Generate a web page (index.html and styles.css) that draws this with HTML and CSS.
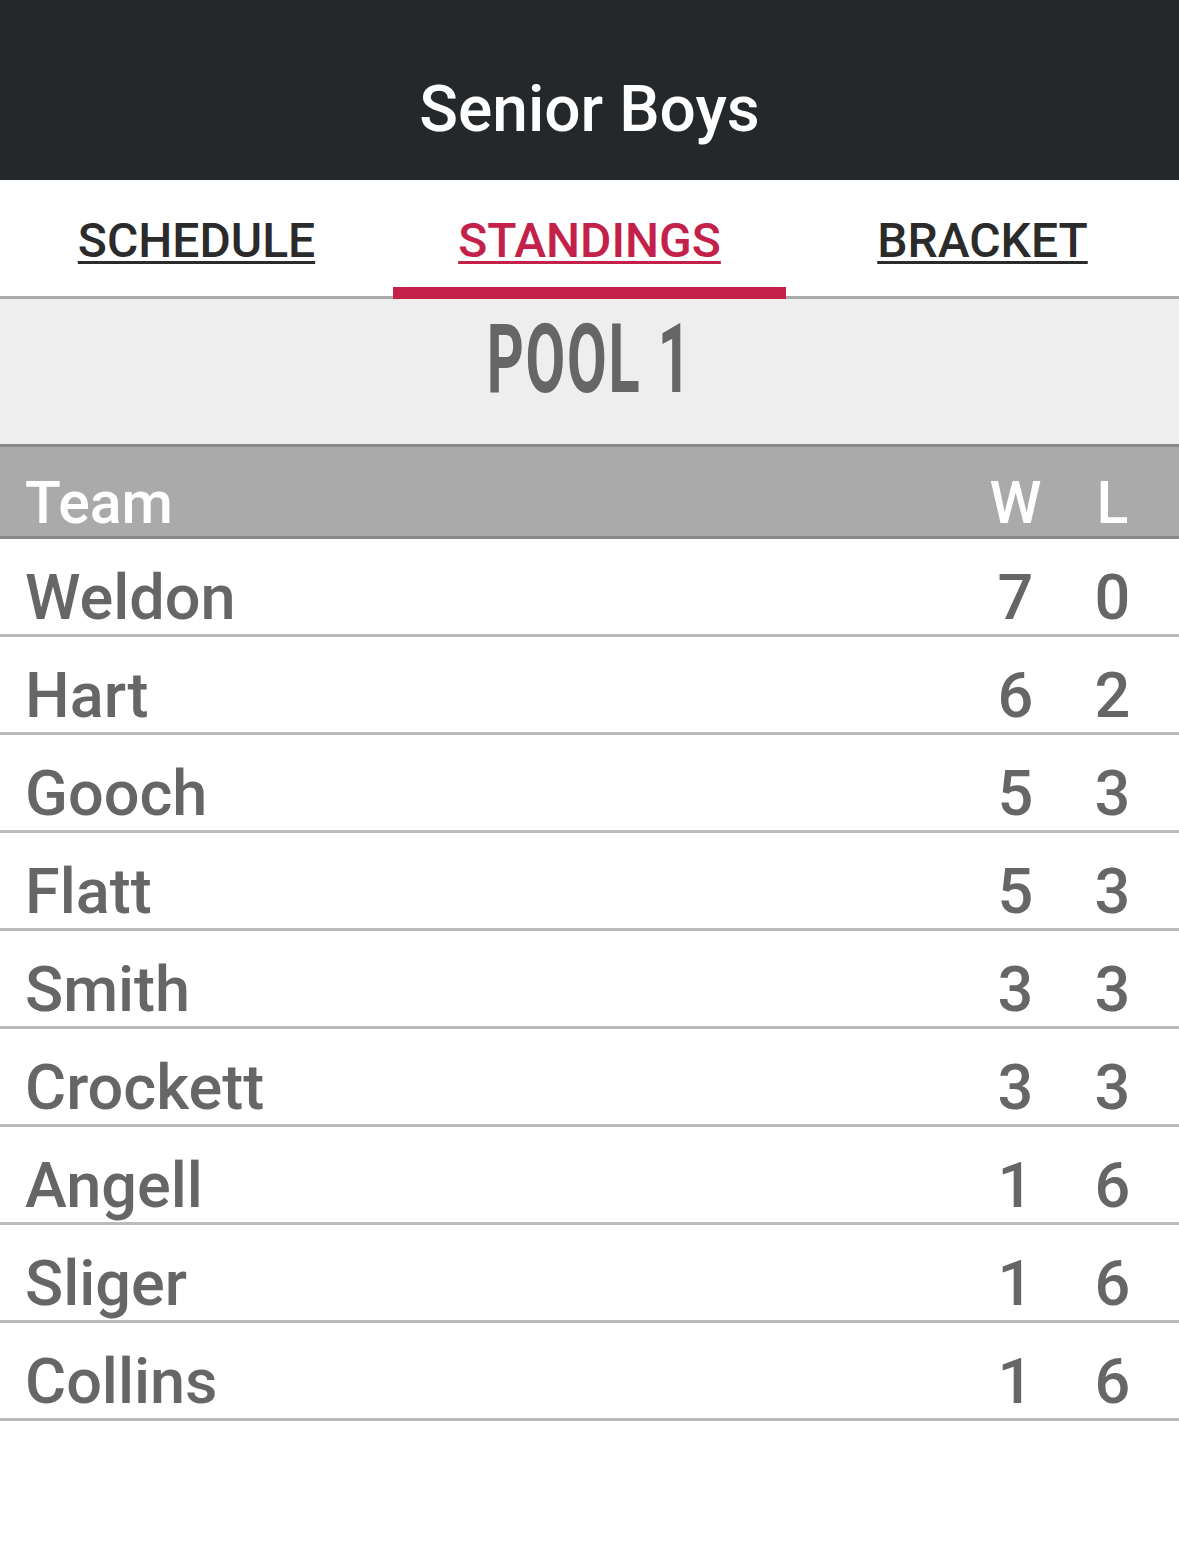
FILE: index.html
```html
<!DOCTYPE html>
<html lang="en">
<head>
<meta charset="utf-8">
<title>Senior Boys – Standings</title>
<link rel="stylesheet" href="styles.css">
</head>
<body>
  <header class="topbar">
    <h1 class="title">Senior Boys</h1>
  </header>
  <nav class="tabs">
    <a class="tab" href="#">SCHEDULE</a>
    <a class="tab tab-active" href="#">STANDINGS</a>
    <a class="tab" href="#">BRACKET</a>
  </nav>
  <section class="pool">
    <h2 class="pool-title"><span class="pool-text">POOL 1</span></h2>
  </section>
  <div class="table">
    <div class="row head">
      <span class="team">Team</span><span class="stat">W</span><span class="stat">L</span>
    </div>
    <div class="row"><span class="team">Weldon</span><span class="stat">7</span><span class="stat">0</span></div>
    <div class="row"><span class="team">Hart</span><span class="stat">6</span><span class="stat">2</span></div>
    <div class="row"><span class="team">Gooch</span><span class="stat">5</span><span class="stat">3</span></div>
    <div class="row"><span class="team">Flatt</span><span class="stat">5</span><span class="stat">3</span></div>
    <div class="row"><span class="team">Smith</span><span class="stat">3</span><span class="stat">3</span></div>
    <div class="row"><span class="team">Crockett</span><span class="stat">3</span><span class="stat">3</span></div>
    <div class="row"><span class="team">Angell</span><span class="stat">1</span><span class="stat">6</span></div>
    <div class="row"><span class="team">Sliger</span><span class="stat">1</span><span class="stat">6</span></div>
    <div class="row"><span class="team">Collins</span><span class="stat">1</span><span class="stat">6</span></div>
  </div>
</body>
</html>
```

FILE: styles.css
```css
html, body {
  margin: 0;
  padding: 0;
  background: #ffffff;
  font-family: Roboto, "Liberation Sans", Arial, sans-serif;
}

.topbar {
  box-sizing: border-box;
  height: 180px;
  padding-top: 78px;
  background: #24282b;
  text-align: center;
}

.title {
  margin: 0;
  font-size: 64px;
  line-height: 64px;
  font-weight: 500;
  color: #ffffff;
}

.tabs {
  display: grid;
  grid-template-columns: 1fr 1fr 1fr;
  border-bottom: 3px solid #aaaaaa;
}

.tab {
  position: relative;
  box-sizing: border-box;
  height: 116px;
  padding-top: 37px;
  text-align: center;
  font-size: 48px;
  line-height: 48px;
  font-weight: 500;
  color: #2b2b2b;
  text-decoration: underline;
  text-decoration-thickness: 3px;
  text-underline-offset: 4px;
}

.tab-active {
  color: #c4214a;
}

.tab-active::after {
  content: "";
  position: absolute;
  left: 0;
  right: 0;
  bottom: -3px;
  height: 12px;
  background: #c4214a;
}

.pool {
  box-sizing: border-box;
  height: 145px;
  padding-top: 12px;
  background: #eeeeee;
  text-align: center;
}

.pool-title {
  margin: 0;
  font-size: 96px;
  line-height: 96px;
  font-weight: 700;
  color: #666666;
}

.pool-text {
  display: inline-block;
  letter-spacing: 3px;
  transform: scaleX(0.6);
  transform-origin: center;
}

.row {
  display: flex;
  align-items: flex-start;
  padding: 27px 18px 4px 25px;
  border-bottom: 3px solid #bbbbbb;
  font-size: 63px;
  line-height: 64px;
  font-weight: 500;
  color: #666666;
}

.row.head {
  padding-top: 26px;
  padding-bottom: 3px;
  background: #aaaaaa;
  border-top: 3px solid #888888;
  border-bottom: 3px solid #888888;
  font-size: 59px;
  line-height: 60px;
  color: #ffffff;
}

.team {
  flex: 1;
}

.stat {
  width: 97px;
  text-align: center;
}
```
